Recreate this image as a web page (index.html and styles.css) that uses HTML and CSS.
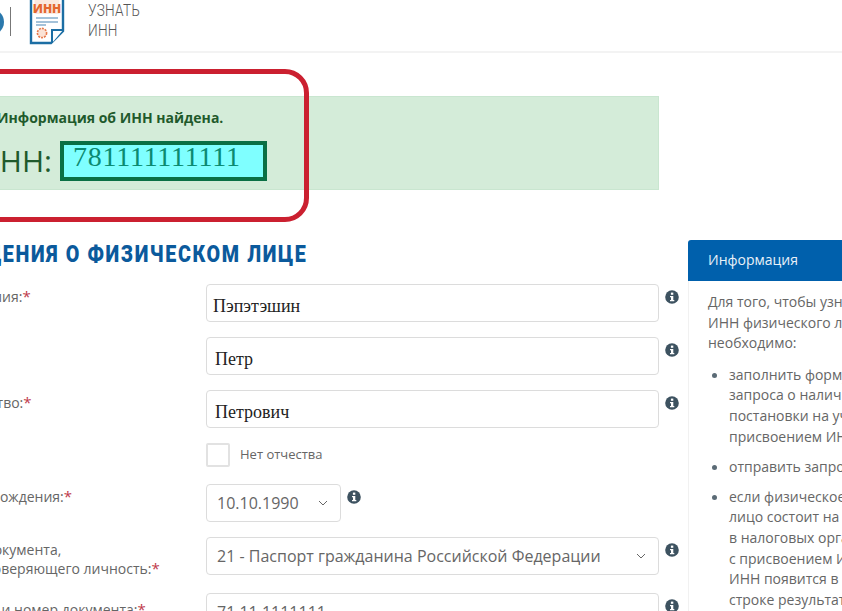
FILE: index.html
```html
<!DOCTYPE html>
<html lang="ru">
<head>
<meta charset="utf-8">
<title>Узнать ИНН</title>
<link rel="stylesheet" href="styles.css">
</head>
<body>
<svg class="defs" width="0" height="0" aria-hidden="true">
  <symbol id="info" viewBox="0 0 14 14">
    <circle cx="7" cy="7" r="6.8" fill="#3d5260"/>
    <rect x="5.9" y="2.6" width="2.4" height="2.2" fill="#fff"/>
    <path d="M5 6h3.3v4h1v1.3H5V10h1V7.3H5z" fill="#fff"/>
  </symbol>
  <symbol id="chev" viewBox="0 0 10 6">
    <path d="M1 1l4 4 4-4" fill="none" stroke="#666" stroke-width="1"/>
  </symbol>
</svg>
<div class="page">
  <header class="top">
    <div class="emblem"></div>
    <div class="divider"></div>
    <svg class="logo" width="36" height="45" viewBox="0 0 36 45">
      <path d="M2 -3H34V31L22 43H2z" fill="#fff" stroke="#1c6ea4" stroke-width="2.4"/>
      <path d="M34 30H23V43" fill="#fff" stroke="#1c6ea4" stroke-width="2"/>
      <rect x="5.5" y="0" width="25" height="14" fill="#fbe9df"/>
      <text x="18" y="12.5" class="logo-text" text-anchor="middle">ИНН</text>
      <path d="M7 18h22M7 22h22M7 25h10" stroke="#4a86b3" stroke-width="1.2"/>
      <circle cx="13" cy="33" r="4.6" fill="#fbe3d6" stroke="#e8794a" stroke-width="1.6" stroke-dasharray="2 1"/>
    </svg>
    <div class="title">УЗНАТЬ<br>ИНН</div>
  </header>

  <div class="content">
    <main class="main">
      <section class="alert">
        <p class="alert-msg">Информация об ИНН найдена.</p>
        <div class="alert-val">
          <span class="inn-label">ИНН:</span>
          <span class="inn-box">781111111111</span>
        </div>
      </section>

      <h2 class="heading"><span>СВЕДЕНИЯ О ФИЗИЧЕСКОМ ЛИЦЕ</span></h2>

      <form class="form">
        <div class="row">
          <div class="label">Фамилия:<i>*</i></div>
          <div class="field serif tight">Пэпэтэшин</div>
          <svg class="info"><use href="#info"/></svg>
        </div>
        <div class="row">
          <div class="label">Имя:<i>*</i></div>
          <div class="field serif">Петр</div>
          <svg class="info"><use href="#info"/></svg>
        </div>
        <div class="row">
          <div class="label">Отчество:<i>*</i></div>
          <div class="field serif">Петрович</div>
          <svg class="info"><use href="#info"/></svg>
        </div>
        <div class="row row-check">
          <div class="label"></div>
          <div class="check"></div>
          <span class="check-label">Нет отчества</span>
        </div>
        <div class="row">
          <div class="label">Дата рождения:<i>*</i></div>
          <div class="field select date"><span>10.10.1990</span><svg class="chev"><use href="#chev"/></svg></div>
          <svg class="info"><use href="#info"/></svg>
        </div>
        <div class="row">
          <div class="label">Вид документа,<br>удостоверяющего личность:<i>*</i></div>
          <div class="field select"><span>21 - Паспорт гражданина Российской Федерации</span><svg class="chev"><use href="#chev"/></svg></div>
          <svg class="info"><use href="#info"/></svg>
        </div>
        <div class="row">
          <div class="label low">Серия и номер документа:<i>*</i></div>
          <div class="field plain">71 11 1111111</div>
          <svg class="info"><use href="#info"/></svg>
        </div>
      </form>
    </main>

    <aside class="side">
      <div class="side-head">Информация</div>
      <div class="side-body">
        <p>Для того, чтобы узнать<br>ИНН физического лица,<br>необходимо:</p>
        <ul>
          <li>заполнить форму<br>запроса о наличии<br>постановки на учет с<br>присвоением ИНН</li>
          <li>отправить запрос</li>
          <li>если физическое<br>лицо состоит на учете<br>в налоговых органах<br>с присвоением ИНН,<br>ИНН появится в<br>строке результата</li>
        </ul>
      </div>
    </aside>
  </div>

  <div class="ring"></div>
</div>
</body>
</html>
```
FILE: styles.css
```css
* { box-sizing: border-box; }
html, body { margin: 0; padding: 0; background: #fff; }
.defs { position: absolute; }
.page {
  position: relative;
  width: 842px;
  height: 611px;
  overflow: hidden;
  font-family: "Open Sans", "Liberation Sans", sans-serif;
  color: #555;
}
.top {
  height: 53px;
  display: flex;
  align-items: flex-start;
  border-bottom: 2px solid #f3f3f3;
  margin-left: -22px;
}
.emblem {
  width: 26px;
  height: 26px;
  margin-top: 9px;
  border-radius: 50%;
  background: #2b79ad;
}
.divider {
  width: 1px;
  height: 29px;
  margin: 7px 18px 0 6px;
  background: #777;
}
.logo { display: block; flex: none; }
.logo-text { font: 900 12px "Open Sans", sans-serif; fill: #e4672e; }
.title {
  margin-left: 23px;
  font: 300 17px/20px Roboto, sans-serif;
  letter-spacing: .3px;
  color: #555;
  transform: scaleX(.8);
  transform-origin: left top;
}
.content {
  display: flex;
  margin-left: -50px;
  width: 1000px;
}
.main { width: 709px; flex: none; }
.alert {
  margin-top: 43px;
  height: 94px;
  background: #d4ecd9;
  border: 1px solid #c9e6d0;
  padding: 11px 0 0 46px;
  color: #1f5a2c;
}
.alert-msg {
  margin: 0;
  font-size: 14px;
  line-height: 20px;
  font-weight: 700;
}
.alert-val {
  display: flex;
  align-items: center;
  margin-top: 13px;
}
.inn-label {
  font-size: 30px;
  line-height: 40px;
  margin-left: -20px;
  width: 83px;
}
.inn-box {
  width: 207px;
  height: 40px;
  border: 4px solid #0a7045;
  background: #7fffff;
  color: #0b8a70;
  font: 28px/24px "Liberation Serif", serif;
  letter-spacing: .75px;
  padding-left: 9px;
}
.heading {
  margin: 46px 0 0 -5px;
  height: 48px;
  font-size: 24px;
  line-height: 34px;
  white-space: nowrap;
}
.heading span {
  display: inline-block;
  font-family: Roboto, sans-serif;
  font-weight: 900;
  color: #0b5a9c;
  letter-spacing: 2px;
  transform: scaleX(.82);
  transform-origin: left top;
}
.row {
  display: flex;
  align-items: flex-start;
  margin-bottom: 15px;
}
.row-check { margin-bottom: 17px; height: 24px; align-items: center; }
.label {
  width: 256px;
  flex: none;
  padding: 3px 0 0 6px;
  font-size: 14px;
  line-height: 19px;
  color: #666;
  white-space: nowrap;
}
.label.low { padding-top: 7px; }
.label i { color: #c0394b; font-style: normal; font-size: 15px; }
.field {
  width: 453px;
  height: 38px;
  flex: none;
  border: 1px solid #dcdcdc;
  border-radius: 4px;
  background: #fff;
  display: flex;
  align-items: center;
  justify-content: space-between;
  padding: 0 11px 0 8px;
  font-size: 16px;
  color: #666;
  white-space: nowrap;
}
.field.serif {
  font-family: "Liberation Serif", serif;
  font-size: 18px;
  color: #222;
  padding-top: 7px;
}
.field.tight { padding-left: 6px; }
.field.select { padding-left: 10px; padding-right: 12px; }
.field.plain { padding-left: 10px; }
.field.date { width: 135px; }
.chev { width: 10px; height: 6px; flex: none; }
.info { width: 14px; height: 14px; margin: 6px 0 0 6px; flex: none; }
.check {
  width: 24px;
  height: 24px;
  border: 2px solid #e2e2e2;
  border-radius: 2px;
  background: #fff;
  flex: none;
}
.check-label { margin: -2px 0 0 10px; font-size: 13px; color: #666; }
.side {
  margin-top: 187px;
  margin-left: 29px;
  width: 300px;
  flex: none;
  font-size: 14px;
  line-height: 20.6px;
  color: #666;
  white-space: nowrap;
}
.side-head {
  height: 41px;
  background: #0060ac;
  border-radius: 3px 3px 0 0;
  color: #e8f1f8;
  padding: 10px 0 0 20px;
}
.side-body {
  border-left: 1px solid #f1f1f1;
  padding: 11px 0 0 19px;
  height: 340px;
}
.side-body p { margin: 0 0 11px; }
.side-body ul { margin: 0; padding: 0 0 0 21px; list-style: none; }
.side-body li { position: relative; margin-bottom: 9.5px; }
.side-body li::before {
  content: "";
  position: absolute;
  left: -17px;
  top: 8px;
  width: 5px;
  height: 5px;
  border-radius: 50%;
  background: #5b6b76;
}
.ring {
  position: absolute;
  left: -40px;
  top: 69px;
  width: 349px;
  height: 153px;
  border: 5px solid #cb2030;
  border-radius: 24px;
  pointer-events: none;
}
```
